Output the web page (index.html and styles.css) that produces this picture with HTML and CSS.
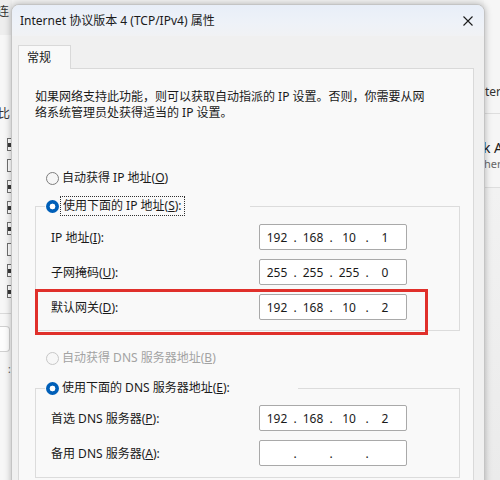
FILE: index.html
```html
<!DOCTYPE html>
<html lang="zh-CN">
<head>
<meta charset="utf-8">
<title>Internet 协议版本 4 (TCP/IPv4) 属性</title>
<link rel="stylesheet" href="styles.css">
</head>
<body>
<div class="desk">
  <div class="bgwin bg-left">
    <div class="bl-head"><span class="bl-char">连</span></div>
    <div class="bl-body">
      <span class="bl-char bl-bi">比</span>
      <div class="bl-checks">
        <span class="cb on"></span><span class="cb"></span><span class="cb on"></span><span class="cb on"></span>
        <span class="cb on"></span><span class="cb"></span><span class="cb on"></span><span class="cb on"></span>
      </div>
      <div class="bl-sep"></div>
      <div class="bl-btn"></div>
      <span class="bl-dot">:</span>
    </div>
  </div>

  <div class="bgwin bg-right">
    <div class="br-top"><span class="br-t1">ter</span></div>
    <div class="br-item"><span class="br-t2">k A</span><span class="br-t3">her</span></div>
    <div class="br-rest"></div>
  </div>

  <div class="dialog">
    <div class="titlebar">
      <span class="title">Internet 协议版本 4 (TCP/IPv4) 属性</span>
      <svg class="close" width="10" height="10" viewBox="0 0 10 10"><path d="M0.5 0.5 L9.5 9.5 M9.5 0.5 L0.5 9.5" stroke="#1b1b1b" stroke-width="1.1" fill="none"/></svg>
    </div>
    <div class="body">
      <div class="tabs"><div class="tab">常规</div></div>
      <div class="panel">
        <p class="desc">如果网络支持此功能，则可以获取自动指派的 IP 设置。否则，你需要从网<br>络系统管理员处获得适当的 IP 设置。</p>

        <div class="radio r-first"><span class="rb"></span><span class="rt">自动获得 IP 地址(<u>O</u>)</span></div>

        <fieldset class="group g1">
          <legend class="lg lg1"><span class="radio"><span class="rb sel"></span><span class="rt focus">使用下面的 IP 地址(<u>S</u>):</span></span></legend>
          <div class="rows">
            <div class="row"><span class="lbl">IP 地址(<u>I</u>):</span><span class="ip"><span class="f">192</span><span class="d">.</span><span class="f">168</span><span class="d">.</span><span class="f">10</span><span class="d">.</span><span class="f">1</span></span></div>
            <div class="row"><span class="lbl">子网掩码(<u>U</u>):</span><span class="ip"><span class="f">255</span><span class="d">.</span><span class="f">255</span><span class="d">.</span><span class="f">255</span><span class="d">.</span><span class="f">0</span></span></div>
            <div class="row"><span class="lbl">默认网关(<u>D</u>):</span><span class="ip"><span class="f">192</span><span class="d">.</span><span class="f">168</span><span class="d">.</span><span class="f">10</span><span class="d">.</span><span class="f">2</span></span></div>
          </div>
        </fieldset>

        <div class="radio r-dis"><span class="rb dis"></span><span class="rt">自动获得 DNS 服务器地址(<u>B</u>)</span></div>

        <fieldset class="group g2">
          <legend class="lg lg2"><span class="radio"><span class="rb sel"></span><span class="rt">使用下面的 DNS 服务器地址(<u>E</u>):</span></span></legend>
          <div class="rows">
            <div class="row"><span class="lbl">首选 DNS 服务器(<u>P</u>):</span><span class="ip"><span class="f">192</span><span class="d">.</span><span class="f">168</span><span class="d">.</span><span class="f">10</span><span class="d">.</span><span class="f">2</span></span></div>
            <div class="row"><span class="lbl">备用 DNS 服务器(<u>A</u>):</span><span class="ip"><span class="f"></span><span class="d">.</span><span class="f"></span><span class="d">.</span><span class="f"></span><span class="d">.</span><span class="f"></span></span></div>
          </div>
        </fieldset>
      </div>
    </div>
    <div class="redmark"></div>
  </div>
</div>
</body>
</html>
```

FILE: styles.css
```css
* { box-sizing: border-box; }
html, body { margin: 0; padding: 0; }
body {
  font-family: "Noto Sans", "Noto Sans CJK SC", sans-serif;
  font-size: 12px;
  color: #1a1a1a;
}
u { text-decoration: underline; text-underline-offset: 1px; }

.desk {
  position: relative;
  width: 500px;
  height: 480px;
  overflow: hidden;
  background: #f3f3f3;
}

/* background windows */
.bgwin { position: absolute; top: 0; }
.bg-left {
  left: 0;
  width: 12px;
  height: 480px;
  background: #f7f7f7;
  overflow: hidden;
}
.bl-head {
  height: 35px;
  background: #eeeeee;
  padding-top: 3px;
}
.bl-char {
  display: block;
  font-family: "Noto Sans CJK SC", sans-serif;
  font-size: 12px;
  line-height: 16px;
  margin-left: -3px;
  color: #333;
}
.bl-body {
  display: flex;
  flex-direction: column;
  padding-top: 70px;
  height: 445px;
  border-right: 1px solid #d6d6d6;
}
.bl-bi { margin-left: -2px; }
.bl-checks {
  display: flex;
  flex-direction: column;
  gap: 8px;
  margin-top: 17px;
  padding-left: 7px;
}
.cb {
  display: block;
  width: 8px;
  height: 13px;
  border: 1px solid #6f6f6f;
  border-right: none;
  background: #fff;
}
.cb.on { background: linear-gradient(#fff 0 4px, #3a3a3a 4px 8px, #fff 8px); }
.bl-sep { height: 1px; background: #dadada; margin-top: 15px; }
.bl-btn {
  height: 26px;
  margin-top: 12px;
  border: 1px solid #d0d0d0;
  border-left: none;
  border-radius: 0 4px 4px 0;
  background: #fdfdfd;
  width: 10px;
}
.bl-dot { margin-left: 8px; margin-top: 10px; font-size: 10px; color: #555; }

.bg-right {
  left: 484px;
  width: 16px;
  height: 480px;
  background: #f6f6f6;
  display: flex;
  flex-direction: column;
}
.br-top {
  height: 114px;
  padding-top: 84px;
  border-bottom: 1px solid #dedede;
}
.br-t1 { display: block; font-size: 12px; line-height: 16px; color: #333; margin-left: 1px; }
.br-item {
  height: 74px;
  padding-top: 25px;
  border-bottom: 1px solid #dedede;
  display: flex;
  flex-direction: column;
}
.br-t2 { font-size: 14px; line-height: 18px; color: #1a1a1a; margin-left: -1px; white-space: nowrap; }
.br-t3 { font-size: 11px; line-height: 14px; color: #666; white-space: nowrap; }
.br-rest { flex: 1; background: linear-gradient(#f2f2f2, #ebebeb); }

/* dialog */
.dialog {
  position: absolute;
  left: 11px;
  top: 4px;
  width: 474px;
  height: 500px;
  background: #f0f0f0;
  border: 1px solid #c4c4c4;
  border-radius: 8px 8px 0 0;
  box-shadow: 0 0 7px rgba(0,0,0,0.28);
}
.titlebar {
  height: 31px;
  display: flex;
  align-items: center;
  justify-content: space-between;
  padding: 0 11px 0 8px;
  border-radius: 7px 7px 0 0;
  background: linear-gradient(#e8eef8, #eef2f8 60%, #f1f2f4);
}
.title { font-size: 12px; line-height: 16px; color: #1a1a1a; }
.close { display: block; }

.body { padding: 9px 10px 0 6px; }
.tabs { display: flex; }
.tab {
  width: 53px;
  height: 24px;
  background: #f9f9f9;
  border: 1px solid #d9d9d9;
  border-bottom: none;
  padding-left: 8px;
  line-height: 23px;
  margin-bottom: -1px;
  position: relative;
  z-index: 1;
}
.panel {
  background: #f9f9f9;
  border: 1px solid #d9d9d9;
  padding: 20px 13px 0 16px;
  height: 420px;
}
.desc {
  margin: 0;
  line-height: 16px;
  white-space: nowrap;
}

.radio {
  display: flex;
  align-items: center;
  height: 20px;
  padding-left: 11px;
}
.lg .radio { padding-left: 1px; }
.rb {
  width: 13px;
  height: 13px;
  border-radius: 50%;
  border: 1px solid #7d7d7d;
  background: #f6f6f6;
  flex: none;
  margin-right: 3px;
}
.rb.sel {
  border: none;
  background: radial-gradient(circle, #ffffff 0 2.6px, #005fb8 3.2px);
}
.rb.dis { border-color: #c7c7c7; background: #f7f7f7; }
.rt { line-height: 16px; white-space: nowrap; }
.rt.focus {
  outline: 1px dotted #303030;
  outline-offset: 1px;
  padding: 0 1px;
}
.r-first { margin-top: 47px; }
.r-dis { margin-top: 17px; color: #a3a3a3; }

.group {
  margin: 0;
  padding: 0;
  border: 1px solid #dcdcdc;
  min-width: 0;
}
.g1 { margin-top: 8px; height: 135px; }
.g2 { margin-top: 10px; height: 100px; }
.lg {
  padding: 0;
  margin-left: 9px;
  height: 20px;
}
.lg1 { width: 205px; }
.lg2 { width: 253px; }
.rows {
  display: flex;
  flex-direction: column;
  gap: 9px;
  padding: 8px 0 0 15px;
}
.g2 .rows { padding-top: 7px; }
.row {
  display: flex;
  align-items: center;
  height: 26px;
}
.lbl { width: 208px; white-space: nowrap; }
.ip {
  display: flex;
  align-items: center;
  width: 148px;
  height: 26px;
  background: #fff;
  border: 1px solid #a9a9a9;
  border-radius: 2px;
  padding-left: 5px;
}
.f { width: 24px; text-align: center; }
.d { width: 12px; text-align: center; }

.redmark {
  position: absolute;
  left: 23px;
  top: 284px;
  width: 393px;
  height: 46px;
  border: 3px solid #e0302b;
  pointer-events: none;
}
```
